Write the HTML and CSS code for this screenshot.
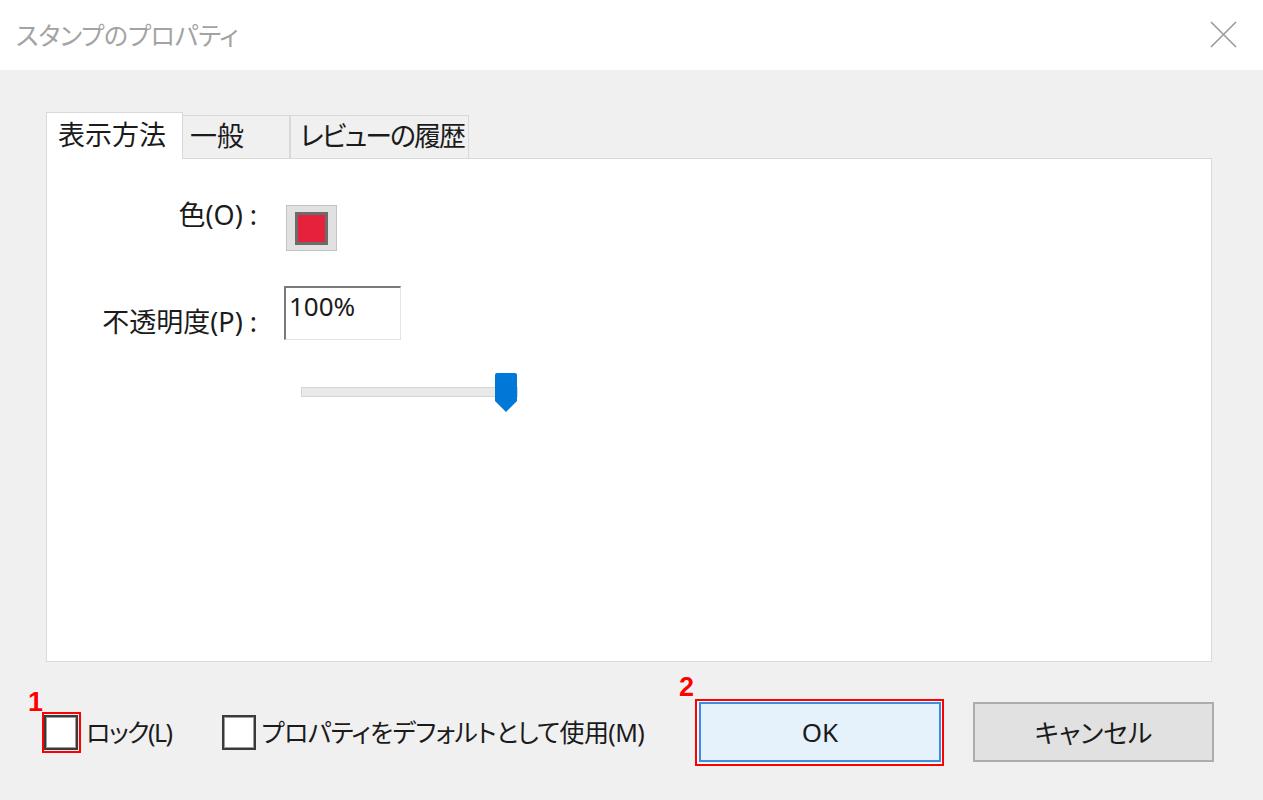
FILE: index.html
```html
<!DOCTYPE html>
<html lang="ja">
<head>
<meta charset="utf-8">
<title>スタンプのプロパティ</title>
<link rel="stylesheet" href="styles.css">
</head>
<body>
<div class="window">
  <header class="titlebar">
    <span class="title">スタンプのプロパティ</span>
    <svg class="close" width="27" height="27" viewBox="0 0 27 27" aria-hidden="true">
      <path d="M1 1 L26 26 M26 1 L1 26" stroke="#9a9a9a" stroke-width="1.6" fill="none"/>
    </svg>
  </header>
  <main class="content">
    <div class="tabs">
      <div class="tab tab-active">表示方法</div>
      <div class="tab tab-general">一般</div>
      <div class="tab tab-history">レビューの履歴</div>
    </div>
    <section class="panel">
      <div class="form">
        <div class="label label-color">色(O) :</div>
        <div class="swatch"><span class="swatch-inner"></span></div>
        <div class="label label-opacity">不透明度(P) :</div>
        <div class="textbox">100%</div>
        <div class="spacer"></div>
        <div class="slider">
          <div class="track"></div>
          <svg class="thumb" width="22" height="40" viewBox="0 0 22 40" aria-hidden="true">
            <path d="M2 0 H20 Q22 0 22 2 V28 L11 39 L0 28 V2 Q0 0 2 0 Z" fill="#0078d7"/>
          </svg>
        </div>
      </div>
    </section>
    <div class="footer">
      <div class="checks">
        <label class="check check-lock">
          <span class="box box-marked"><span class="num num-1">1</span></span>
          <span class="check-text">ロック(L)</span>
        </label>
        <label class="check check-default">
          <span class="box"></span>
          <span class="check-text">プロパティをデフォルトとして使用(M)</span>
        </label>
      </div>
      <div class="buttons">
        <button class="btn btn-ok">OK<span class="num num-2">2</span></button>
        <button class="btn btn-cancel">キャンセル</button>
      </div>
    </div>
  </main>
</div>
</body>
</html>
```

FILE: styles.css
```css
html, body {
  margin: 0;
  padding: 0;
}
body {
  width: 1263px;
  height: 800px;
  overflow: hidden;
  background: #f0f0f0;
  font-family: "Noto Sans", "Noto Sans CJK JP", sans-serif;
  font-feature-settings: "palt";
  color: #1b1b1b;
}
.titlebar {
  height: 70px;
  background: #ffffff;
  display: flex;
  align-items: center;
  justify-content: space-between;
  padding: 0 26px 0 16px;
  box-sizing: border-box;
}
.title {
  font-size: 25px;
  letter-spacing: -0.2px;
  color: #a3a3a3;
  line-height: 30px;
}
.close {
  display: block;
  margin-top: -2px;
}
.content {
  padding: 41px 51px 0 46px;
}
.tabs {
  display: flex;
  align-items: flex-end;
  height: 47px;
}
.tab {
  box-sizing: border-box;
  height: 43px;
  border: 1px solid #d9d9d9;
  border-bottom: none;
  background: #f0f0f0;
  font-size: 27px;
  line-height: 40px;
  padding-left: 7px;
  white-space: nowrap;
  overflow: hidden;
}
.tab-active {
  width: 137px;
  height: 47px;
  background: #ffffff;
  padding-left: 11px;
  line-height: 44px;
  margin-bottom: -1px;
  position: relative;
  z-index: 1;
}
.tab-general {
  width: 107px;
  border-left: none;
}
.tab-history {
  width: 179px;
  border-left: 1px solid #d9d9d9;
  padding-left: 9px;
  letter-spacing: -2px;
}
.panel {
  box-sizing: border-box;
  height: 504px;
  background: #ffffff;
  border: 1px solid #d9d9d9;
  padding-top: 46px;
}
.form {
  display: grid;
  grid-template-columns: 210px auto;
  grid-template-rows: 46px 54px 40px;
  column-gap: 27px;
  row-gap: 35px;
  justify-content: start;
}
.form .spacer {
  height: 0;
}
.label {
  text-align: right;
  font-size: 27px;
  line-height: 32px;
  white-space: nowrap;
}
.label-color {
  align-self: start;
  margin-top: -6px;
}
.label-opacity {
  align-self: end;
  margin-bottom: 2px;
}
.swatch {
  box-sizing: border-box;
  width: 51px;
  height: 46px;
  margin-left: 2px;
  background: #e1e1e1;
  border: 1px solid #c4c4c4;
  display: flex;
  align-items: center;
  justify-content: center;
}
.swatch-inner {
  box-sizing: border-box;
  width: 33px;
  height: 33px;
  background: #e5213b;
  border: 3px solid #6c6c6c;
}
.textbox {
  box-sizing: border-box;
  width: 117px;
  height: 54px;
  background: #ffffff;
  border-top: 2px solid #7a7a7a;
  border-left: 2px solid #7a7a7a;
  border-right: 1px solid #e3e3e3;
  border-bottom: 1px solid #e3e3e3;
  font-size: 26px;
  line-height: 30px;
  padding: 3px 0 0 3px;
}
.slider {
  position: relative;
  width: 218px;
  height: 40px;
  margin-left: 17px;
  margin-top: -2px;
}
.track {
  box-sizing: border-box;
  margin-top: 14px;
  width: 217px;
  height: 10px;
  background: #e7eae7;
  border: 1px solid #d6d6d6;
}
.thumb {
  position: absolute;
  left: 194px;
  top: 0;
  display: block;
}
.footer {
  display: flex;
  align-items: center;
  margin-top: 40px;
  height: 60px;
}
.checks {
  display: flex;
  align-items: center;
  margin-left: -2px;
}
.check {
  display: flex;
  align-items: center;
}
.check-default {
  margin-left: 50px;
}
.box {
  position: relative;
  box-sizing: border-box;
  width: 34px;
  height: 35px;
  background: #ffffff;
  border: 2px solid #3a3a3a;
  box-shadow: inset 0 0 0 1px #9c9c9c;
}
.box-marked::after {
  content: "";
  position: absolute;
  left: -4px;
  top: -5px;
  right: -5px;
  bottom: -5px;
  border: 2px solid #ff0000;
}
.check-text {
  font-size: 25px;
  letter-spacing: -0.6px;
  line-height: 32px;
  margin-left: 8px;
  white-space: nowrap;
}
.check-lock .check-text {
  letter-spacing: -1.5px;
}
.check-default .check-text {
  margin-left: 6px;
}
.num {
  position: absolute;
  font-family: "Liberation Sans", Arial, sans-serif;
  font-weight: bold;
  font-size: 27px;
  line-height: 27px;
  letter-spacing: 0;
  color: #ff0000;
  text-shadow: 0 0 2px #ffffff, 0 0 2px #ffffff;
}
.num-1 {
  left: -18px;
  top: -28px;
}
.num-2 {
  left: -22px;
  top: -30px;
}
.buttons {
  display: flex;
  margin-left: auto;
  margin-right: -2px;
  gap: 32px;
}
.btn {
  position: relative;
  box-sizing: border-box;
  height: 60px;
  font-family: "Noto Sans", "Noto Sans CJK JP", sans-serif;
  font-feature-settings: "palt";
  font-size: 26px;
  color: #1b1b1b;
  padding: 0;
  cursor: default;
}
.btn-ok {
  width: 242px;
  background: #e5f1fb;
  border: 2px solid #3d8ee0;
}
.btn-ok::after {
  content: "";
  position: absolute;
  left: -6px;
  top: -5px;
  right: -5px;
  bottom: -6px;
  border: 2px solid #ff0000;
  box-shadow: inset 0 0 0 1px #ffffff;
}
.btn-cancel {
  width: 241px;
  background: #e1e1e1;
  border: 2px solid #adadad;
}
```
